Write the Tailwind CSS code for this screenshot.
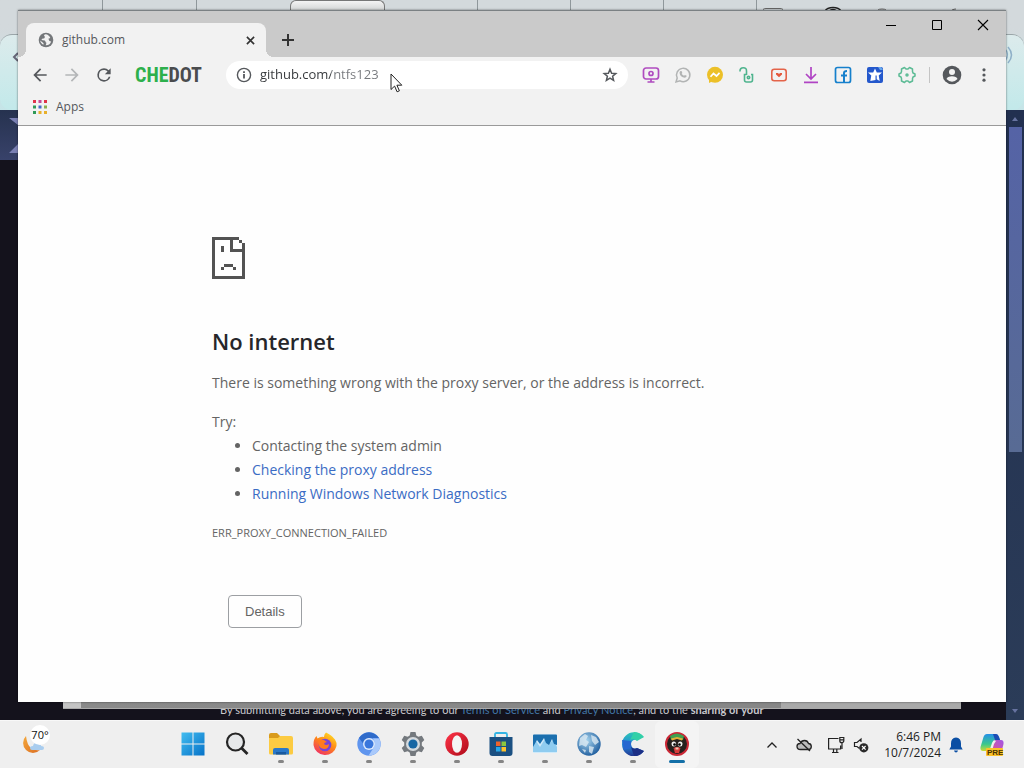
<!DOCTYPE html>
<html lang="en">
	<head>
		<meta charset="UTF-8" />
		<meta name="viewport" content="width=device-width, initial-scale=1.0" />
		<script src="https://cdn.jsdelivr.net/npm/@tailwindcss/browser@4"></script>
		<title>github.com</title>
	</head>
	<body class="h-screen flex flex-col overflow-hidden font-['Open_Sans','Noto_Sans',sans-serif] bg-[#14121c]">
		<main class="relative flex-1 flex flex-col">
			<!-- Browser behind -->
			<div class="h-[110px] bg-linear-to-b from-[#d3d9dc] from-25% to-[#c5e5e8] flex flex-col">
				<div class="h-[34px] flex items-start pl-[9px]">
					<span class="w-[94px] h-[11px] border-r border-[#8f979b]"></span>
					<span class="w-[94px] h-[11px] border-r border-[#8f979b]"></span>
					<span class="w-[93px] h-[11px]"></span>
					<span class="w-[95px] h-[11px] border border-b-0 border-[#777] rounded-t-md bg-linear-to-b from-[#f4f4f4] to-[#d0d2d2]"></span>
					<span class="w-[93px] h-[11px] border-r border-[#8f979b]"></span>
					<span class="w-[93px] h-[11px] border-r border-[#8f979b]"></span>
					<span class="w-[93px] h-[11px] border-r border-[#8f979b]"></span>
					<span class="w-[93px] h-[11px] border-r border-[#8f979b]"></span>
					<svg class="w-[200px] h-[11px]" viewBox="0 0 200 11" fill="none" stroke="#666">
						<path d="M6 9.500q1-1 3-1h14q2 0 3 1M195 10q2-1 4-1M121 10q1-1 4-1t4 1" />
						<path stroke="#222" stroke-width="1.500" d="M68 11q2-3.500 8-3.500t8 3.500M72 11q4-3 8 0" />
					</svg>
				</div>
				<div class="flex-1 flex justify-between items-start border-t border-[#9aa5a8] rounded-xl bg-linear-to-b from-[#dcebec] to-[#c2e9ea]">
					<svg class="mt-4 ml-3 w-2 h-3" viewBox="0 0 8 12" fill="none" stroke="#667" stroke-width="2"><path d="M6 2L2 6l4 4" /></svg>
					<svg class="mt-2 mr-2 w-3 h-6" viewBox="0 0 12 24" fill="none" stroke="#8fb0c8" stroke-width="1.500"><path d="M1 6q5 5 0 12M4 4q7 8 0 16" /></svg>
				</div>
			</div>
			<div class="flex-1 flex min-h-0">
				<div class="flex-1 flex flex-col">
					<div class="h-[50px] bg-linear-to-b from-[#26324f] to-[#38426a]">
						<svg class="w-[18px] h-[50px]" viewBox="0 0 18 50" fill="#7a80b4"><path d="M9 8h9v7zM9 43l9-9v9z" /></svg>
					</div>
					<div class="mt-auto grid h-[18px] pl-[63px]">
						<p class="col-start-1 row-start-1 pl-[157px] text-[11px] leading-4 whitespace-nowrap font-['Lato','Open_Sans',sans-serif] text-[#c8c8cc]">By submitting data above, you are agreeing to our <a href="#" class="text-[#4276a6]">Terms of Service</a> and <a href="#" class="text-[#4276a6]">Privacy Notice</a>, and to the <b>sharing of your</b></p>
						<div class="col-start-1 row-start-1 h-[7px] mr-[45px] relative bg-linear-to-r from-[#c4c4c4] from-2% via-[#8a8a8a] via-2% to-[#878787] to-78% border-b border-[#aaa] flex justify-end">
							<span class="w-[20%] bg-[#a9a9a9]"></span>
						</div>
					</div>
				</div>
				<div class="w-[18px] bg-linear-to-b from-[#223050] to-[#2b3c58] flex flex-col items-center">
					<svg class="w-4 h-[17px]" viewBox="0 0 16 17" fill="#6773a0"><path d="M5 11l3-4 3 4z" /></svg>
					<div class="w-[13px] h-[325px] bg-linear-to-b from-[#5563a6] to-[#586b94]"></div>
					<svg class="w-4 h-5 mt-auto" viewBox="0 0 16 20" fill="#6773a0"><path d="M5 9l3 4 3-4z" /></svg>
				</div>
			</div>

			<!-- Chedot window -->
			<section class="absolute top-[10px] bottom-[18px] inset-x-[18px] flex flex-col bg-[#fefefe] border-t border-[#7b8184] shadow-[0_0_2px_#0008]">
				<div class="h-[46px] flex bg-[#cacaca] pl-2">
					<div class="relative mt-3 w-60 flex items-center bg-[#f2f2f2] rounded-t-lg pl-3 pr-2">
						<span class="absolute -left-2 bottom-0 size-2 bg-[radial-gradient(circle_at_0_0,#cacaca_8px,#f2f2f2_8px)]"></span>
						<span class="absolute -right-2 bottom-0 size-2 bg-[radial-gradient(circle_at_100%_0,#cacaca_8px,#f2f2f2_8px)]"></span>
						<svg class="size-4" viewBox="0 0 16 16"><circle cx="8" cy="8" r="7.300" fill="#74777a" /><path fill="#f2f2f2" d="M7.500 2.300c-2 .2-1.500 2-.4 2.400l-1 1.800H4.600L3.300 8l3.400.4c1 .7.600 2 1.800 2.300l-.8 2.600c3 .2 4.800-1.500 5.400-3.800l-1.700-.5-1-2.200 1.900-.9c-.7-1.800-2.500-3.500-4.800-3.600zM2.200 8.500c.3 2 1.500 3.500 3.200 4.300l.2-1.600z" /></svg>
						<span class="ml-2 text-xs text-[#55585c]">github.com</span>
						<button aria-label="Close tab" class="ml-auto size-4 flex items-center justify-center text-[#333]">
							<svg class="size-[9px]" viewBox="0 0 10 10" stroke="currentColor" stroke-width="1.800"><path d="M1 1l8 8M9 1L1 9" /></svg>
						</button>
					</div>
					<button aria-label="New tab" class="mt-3 ml-2 w-7 flex items-center justify-center text-[#333]">
						<svg class="size-3" viewBox="0 0 12 12" stroke="currentColor" stroke-width="2"><path d="M6 0v12M0 6h12" /></svg>
					</button>
					<div class="ml-auto h-7 flex text-black">
						<button aria-label="Minimize" class="w-[46px] flex items-center justify-center"><svg class="size-[10px]" viewBox="0 0 10 10" fill="none" stroke="currentColor"><path d="M0 5.500h10" /></svg></button>
						<button aria-label="Maximize" class="w-[46px] flex items-center justify-center"><svg class="size-[10px]" viewBox="0 0 10 10" fill="none" stroke="currentColor"><path d="M.5.500h9v9h-9z" /></svg></button>
						<button aria-label="Close" class="w-[46px] flex items-center justify-center"><svg class="size-3" viewBox="0 0 12 12" fill="none" stroke="currentColor" stroke-width="1.100"><path d="M1 1l10 10M11 1L1 11" /></svg></button>
					</div>
				</div>

				<div class="h-9 flex items-center bg-[#f2f2f2] text-[#55585c] pl-3">
					<button aria-label="Back"><svg class="size-5" viewBox="0 0 24 24" fill="currentColor"><path d="M20 11H7.830l5.590-5.590L12 4l-8 8 8 8 1.410-1.410L7.830 13H20z" /></svg></button>
					<button aria-label="Forward" class="ml-3 text-[#b4b6b8]"><svg class="size-5" viewBox="0 0 24 24" fill="currentColor"><path d="M4 11h12.170l-5.590-5.590L12 4l8 8-8 8-1.410-1.410L16.170 13H4z" /></svg></button>
					<button aria-label="Reload" class="ml-3"><svg class="size-5" viewBox="0 0 24 24" fill="currentColor"><path d="M17.650 6.350A7.960 7.960 0 0 0 12 4a8 8 0 1 0 7.730 10h-2.080A6 6 0 1 1 12 6c1.660 0 3.140.690 4.220 1.780L13 11h7V4z" /></svg></button>
					<span class="ml-[21px] w-[91px] text-xl leading-7 font-bold font-['Roboto_Condensed','Liberation_Sans_Narrow','DejaVu_Sans_Condensed',sans-serif] text-[#4a4c4e]"><span class="text-[#2db04c]">CHE</span>DOT</span>
					<form class="flex-1 h-7 flex items-center rounded-full bg-white pl-[10px] pr-[10px]">
						<svg class="size-4" viewBox="0 0 16 16" fill="none" stroke="currentColor" stroke-width="1.400"><circle cx="8" cy="8" r="6.600" /><path stroke-width="1.800" d="M8 7v4.500M8 4.300v1.700" /></svg>
						<input type="text" aria-label="Address" value="github.com/ntfs123" class="ml-2 flex-1 min-w-0 text-[13px] outline-none bg-clip-text text-transparent bg-[linear-gradient(90deg,#333639_71px,#75787c_71px)]" />
						<button type="button" aria-label="Bookmark this page"><svg class="size-4" viewBox="0 0 16 16" fill="none" stroke="currentColor" stroke-width="1.500"><path d="M8 2.300l1.600 3.900 4.200.3-3.200 2.700 1 4.200L8 11.200l-3.600 2.200 1-4.200-3.200-2.700 4.200-.3z" /></svg></button>
					</form>
					<div class="ml-[14px] flex items-center gap-[14px]">
						<button aria-label="Screen capture"><svg class="size-[18px]" viewBox="0 0 18 18" fill="none" stroke="#b04cc0" stroke-width="1.700"><rect x="1.500" y="2" width="15" height="11" rx="2.500" /><circle cx="9" cy="7.500" r="2" /><path d="M9 13v2.500M5.500 16h7" /></svg></button>
						<button aria-label="WhatsApp"><svg class="size-[18px]" viewBox="0 0 18 18" fill="none" stroke="#b2b4b4" stroke-width="1.500"><path d="M2 16l1.200-4A6.700 6.700 0 1 1 6 14.900z" /><path fill="#b2b4b4" stroke="none" d="M6.500 5l1.300.2.500 1.800-.6.800q.9 1.500 2.400 2l.8-.8 1.800.8q0 1.700-1.800 2-4.800-.5-5.400-5 .1-1.200 1-1.800z" /></svg></button>
						<button aria-label="Messenger"><svg class="size-[18px]" viewBox="0 0 18 18"><circle cx="9" cy="8.800" r="8" fill="#ecc028" /><path fill="#ecc028" d="M3 12v5l4-2z" /><path fill="none" stroke="#fff" stroke-width="1.700" d="M4.500 10.800l3-3.300 3 2.500 3-3.200" /></svg></button>
						<button aria-label="Unblock"><svg class="size-[18px]" viewBox="0 0 18 18" fill="none" stroke="#4fb48e" stroke-width="1.600"><path d="M2 5.500V5q0-3.300 3.300-3.300T8.500 5v4" /><path d="M8.500 8.500h-2V14q0 2 2 2h4q2 0 2-2V8.500H13" /><circle cx="10.500" cy="11.500" r="1.200" /></svg></button>
						<button aria-label="Video download"><svg class="size-[18px]" viewBox="0 0 18 18" fill="none" stroke="#e4644a" stroke-width="1.600"><rect x="1.800" y="3.300" width="14.400" height="11.400" rx="2.500" /><path fill="#e4583c" stroke="none" d="M6 7h2l1 1 1-1h2v1.500L9 11.300 6 8.500z" /></svg></button>
						<button aria-label="Downloads"><svg class="size-[18px]" viewBox="0 0 18 18" fill="none" stroke="#b044c4" stroke-width="1.700"><path d="M9 1v11.500M4 8l5 5 5-5M2 16.300h14" /></svg></button>
						<button aria-label="Facebook"><svg class="size-[18px]" viewBox="0 0 18 18" fill="none" stroke="#1680cc" stroke-width="1.700"><rect x="1.500" y="1.500" width="15" height="15" rx="2" /><path stroke-width="2" d="M10 16V7q0-2 3-2M7 9.500h6" /></svg></button>
						<button aria-label="Bookmark manager"><svg class="size-[18px]" viewBox="0 0 18 18"><rect x="1" y="1" width="16" height="16" rx="2" fill="#2458cc" /><path fill="#fff" d="M9 2.500l1.800 4H16L12.700 9.500l1 5.500-3-1.800V9.500H9.500V14l-5.200 1 1-5.500L2 6.500h5.200z" /><path fill="#69a8ec" d="M12 1h3l2 3h-3z" /></svg></button>
						<button aria-label="Extension settings"><svg class="size-[18px]" viewBox="0 0 18 18" fill="none" stroke="#5cbb95" stroke-width="1.500" stroke-linejoin="round"><path d="M6.500 1.500L8 3h2l1.500-1.500L14.500 3v2.500l.5 1.500 2 1v2l-2 1-.5 1.500V15l-3 1.500L10 15H8l-1.500 1.500-3-1.500v-2.500L3 11l-2-1V8l2-1 .5-1.500V3z" /><circle cx="9" cy="9" r="1" /></svg></button>
					</div>
					<span class="ml-[13px] w-px h-4 bg-[#c4c4c4]"></span>
					<button aria-label="Profile" class="ml-3"><svg class="size-5" viewBox="0 0 20 20"><circle cx="10" cy="10" r="9.300" fill="#55585c" /><circle cx="10" cy="7" r="3" fill="#f2f2f2" /><path fill="#f2f2f2" d="M4.500 14q1-2.800 5.500-2.800t5.500 2.800Q13 16.700 10 16.700T4.500 14z" /></svg></button>
					<button aria-label="Menu" class="ml-3 mr-3"><svg class="size-5" viewBox="0 0 20 20" fill="currentColor"><circle cx="10" cy="4.800" r="1.600" /><circle cx="10" cy="10" r="1.600" /><circle cx="10" cy="15.200" r="1.600" /></svg></button>
				</div>

				<div class="h-[33px] flex items-center bg-[#f2f2f2] border-b border-[#9a9a9a] pl-[14px] pb-1">
					<a href="#" class="flex items-center gap-2 text-xs text-[#55585c]">
						<svg class="size-4" viewBox="0 0 16 16">
							<path fill="#e0344a" d="M1 1h3v3H1zM12 1h3v3h-3z" /><path fill="#c34a9a" d="M6.500 1h3v3h-3z" />
							<path fill="#2f9a58" d="M1 6.500h3v3H1z" /><path fill="#4468c8" d="M6.500 6.500h3v3h-3z" /><path fill="#8cae50" d="M12 6.500h3v3h-3z" />
							<path fill="#2f9a58" d="M1 12h3v3H1z" /><path fill="#e8b02c" d="M6.500 12h3v3h-3zM12 12h3v3h-3z" />
						</svg>
						Apps
					</a>
				</div>

				<article class="w-full max-w-[600px] mx-auto pt-[111px] text-[#646464] text-sm leading-6">
					<svg class="w-[33px] h-[42px]" viewBox="0 0 11 14" fill="#535353" shape-rendering="crispEdges"><path d="M0 0h9v1H7v3h3V2h1v12H0zM1 1v12h9V5H6V1zM9 1h1v1H9zM3 3h1v2H3zM4 9h3v1H4zM3 10h1v1H3zM7 10h1v1H7z" fill-rule="evenodd" /></svg>
					<h1 class="mt-[46px] text-[22px] leading-8 font-semibold text-[#26262a]">No internet</h1>
					<p class="mt-[14px]">There is something wrong with the proxy server, or the address is incorrect.</p>
					<p class="mt-[15px]">Try:</p>
					<ul class="list-disc pl-10">
						<li>Contacting the system admin</li>
						<li><a href="#" class="text-[#3b6cc4]">Checking the proxy address</a></li>
						<li><a href="#" class="text-[#3b6cc4]">Running Windows Network Diagnostics</a></li>
					</ul>
					<p class="mt-[15px] text-[11px]">ERR_PROXY_CONNECTION_FAILED</p>
					<button class="mt-[50px] ml-4 h-[33px] px-4 border border-[#9c9fa3] rounded font-['Liberation_Sans',Arial,sans-serif] text-[13px]">Details</button>
				</article>
			</section>

			<!-- Mouse pointer -->
			<svg class="absolute left-[390px] top-[73px] w-[13px] h-5" viewBox="0 0 13 20" fill="#fff" stroke="#222"><path d="M1 1v15.500l3.600-3.400 2.500 5.700 2.300-1-2.500-5.600h4.900z" /></svg>
		</main>

		<!-- Taskbar -->
		<footer class="h-12 flex items-center bg-[#efefef] border-t border-[#f8f8f8] text-[#222]">
			<button aria-label="Weather 70°" class="relative w-[171px] h-full flex items-center pl-5">
				<svg class="w-8 h-8" viewBox="0 0 32 32"><defs><linearGradient id="moon" x1="0" y1="0" x2="1" y2="1"><stop offset="0" stop-color="#f4a83a" /><stop offset="1" stop-color="#dc6f24" /></linearGradient></defs><path fill="url(#moon)" d="M6 7a9.500 9.500 0 1 0 14 14q-5 1-9-2T6 7z" /><path fill="#a9cdef" d="M12 21q-2 0-2-2t3-2q1-4 5-3 3 0 3 3 3 0 3 2t-2 2z" /></svg>
				<span class="absolute left-[30px] top-1 size-5 flex items-center justify-center rounded-full bg-white text-[11px] leading-5 text-[#111]">70°</span>
			</button>
			<nav class="h-full flex [&>button]:w-11 [&>button]:h-full [&>button]:flex [&>button]:flex-col [&>button]:items-center [&>button]:gap-1 [&>button]:pt-[11px] [&_svg]:size-6 [&_i]:w-[6px] [&_i]:h-[3px] [&_i]:rounded-full [&_i]:bg-[#858585]">
				<button aria-label="Start"><svg viewBox="0 0 24 24"><defs><linearGradient id="win" x1="0" y1="0" x2="1" y2="1"><stop offset="0" stop-color="#42bdf0" /><stop offset="1" stop-color="#0672c8" /></linearGradient></defs><path fill="url(#win)" d="M.5.500h11v11H.5zM12.500.500h11v11h-11zM.5 12.500h11v11H.5zM12.500 12.500h11v11h-11z" /></svg></button>
				<button aria-label="Search"><svg viewBox="0 0 24 24" fill="none" stroke="#252525" stroke-width="2.200"><circle cx="10.500" cy="10" r="8.500" fill="#e6e8ea" /><path stroke-width="2.800" d="M16.500 16l6 6" /></svg></button>
				<button aria-label="File Explorer"><svg viewBox="0 0 24 24"><path fill="#d99b1c" d="M0 3q0-2 2-2h6l3 3v4H0z" /><path fill="#fccb42" d="M0 6h9l2-2h11q2 0 2 2v15q0 1.500-1.500 1.500h-21Q0 22.500 0 21z" /><path fill="#2a78c8" d="M4 22.500V18q0-2 2-2h12q2 0 2 2v4.500z" /><path fill="#1859a0" d="M7 20h10v2.500H7z" /></svg><i></i></button>
				<button aria-label="Firefox"><svg viewBox="0 0 24 24"><defs><linearGradient id="fox" x1=".8" y1="0" x2=".2" y2="1"><stop offset="0" stop-color="#ffe226" /><stop offset=".45" stop-color="#ff8a16" /><stop offset="1" stop-color="#ee2a6b" /></linearGradient></defs><path fill="url(#fox)" d="M13 .500q6 3 8 6l1 1q2 3 1.500 6.500A11.700 11.700 0 0 1 .5 13Q.3 7 3.500 4l1 2.500Q8 4 11 5q0-3 2-4.500z" /><circle cx="12" cy="13" r="6.300" fill="#7744d8" /><path fill="#ff7a20" d="M5 9q3-2 6-1l3 2q-3 .5-3 2 2 2 5 0 0 5-5 5-6-1-6-8z" /></svg><i></i></button>
				<button aria-label="Chromium"><svg viewBox="0 0 24 24"><circle cx="12" cy="12" r="11.700" fill="#5f95ee" /><path fill="#2f6bca" d="M2 6A11.700 11.700 0 0 1 22 6H12q-5 1-5.500 6z" /><path fill="#a9c9fb" d="M22.200 6.500A11.700 11.700 0 0 1 11.500 23.700L17 15q2-4-1-8.500z" /><circle cx="12" cy="12" r="6" fill="#dce9fc" /><circle cx="12" cy="12" r="4.500" fill="#3976dc" /></svg><i></i></button>
				<button aria-label="Settings"><svg viewBox="0 0 24 24"><path fill="#74797e" d="M9.500 0h5l.8 3.500 2 1.200 3.500-1 2.500 4.200-2.500 2.500v3.200l2.500 2.500-2.500 4.200-3.500-1-2 1.200-.8 3.500h-5l-.8-3.500-2-1.200-3.500 1-2.500-4.200 2.500-2.500v-3.200L.7 7.900l2.500-4.200 3.500 1 2-1.200z" /><circle cx="12" cy="12" r="7" fill="#d5dade" /><circle cx="12" cy="12" r="4.600" fill="#1767a4" /></svg><i></i></button>
				<button aria-label="Opera"><svg viewBox="0 0 24 24"><defs><linearGradient id="opera" x1="0" y1="0" x2="1" y2="1"><stop offset="0" stop-color="#ff3448" /><stop offset="1" stop-color="#ad0a19" /></linearGradient></defs><circle cx="12" cy="12" r="11.700" fill="url(#opera)" /><ellipse cx="12" cy="12" rx="5" ry="8.800" fill="#f4f4f4" /></svg><i></i></button>
				<button aria-label="Microsoft Store"><svg viewBox="0 0 24 24"><path fill="none" stroke="#33b4e4" stroke-width="1.800" d="M6 7V2.500Q6 1 7.500 1h9Q18 1 18 2.500V7" /><path fill="#1b5082" d="M.5 5h23v16q0 3-3 3h-17q-3 0-3-3z" /><path fill="#f0642c" d="M7 9.500h4.500V14H7z" /><path fill="#8cc63f" d="M12.500 9.500H17V14h-4.500z" /><path fill="#28a8ea" d="M7 15h4.500v4.500H7z" /><path fill="#ffc22c" d="M12.500 15H17v4.500h-4.500z" /></svg><i></i></button>
				<button aria-label="Task Manager"><svg viewBox="0 0 24 24"><rect y="2.500" width="24" height="18.500" rx="1" fill="#cfeafa" /><path fill="#64b8ea" d="M0 13l3-4 4 6 5-8 4 5 4-4 4 7v5H0z" opacity=".6" /><path fill="#1b6fae" d="M0 3.500q0-1 1-1h22q1 0 1 1V13l-3-1-2-5-3 6-3-2-2-5-4 6-3-4-4 7z" /></svg><i></i></button>
				<button aria-label="Web browser"><svg viewBox="0 0 24 24"><defs><radialGradient id="globe" cx=".4" cy=".35" r=".7"><stop offset="0" stop-color="#a7d4ee" /><stop offset="1" stop-color="#1c5b9c" /></radialGradient></defs><circle cx="12" cy="12" r="11.700" fill="url(#globe)" /><path fill="#dceaf2" d="M3 6l5-4 3 2-2 4 3 2-3 5-4-2-3 1zM14 3l5 2 3 5-4 3-3-4zM12 14l5 1-2 7-3-2zM5 17l4 1-1 3z" opacity=".8" /></svg><i></i></button>
				<button aria-label="CCleaner Browser"><svg viewBox="0 0 24 24"><defs><linearGradient id="cc" x1="0" y1="0" x2="0" y2="1"><stop offset="0" stop-color="#2cc7b4" /><stop offset=".5" stop-color="#2389da" /><stop offset="1" stop-color="#22368f" /></linearGradient></defs><path fill="url(#cc)" d="M22.500 5A12 12 0 1 0 23 19l-7-3q-5 2-6-4 1-5 6-4z" /><path fill="#32d0a8" d="M13 0q6 0 10 5l-7 4q-3-3-7-1z" /><path fill="#1c2f86" d="M10 15q3 3 6 1l7 3q-4 5-10 5z" /><path fill="#2667d0" d="M1 8l9 1v7l-7 2z" /></svg><i></i></button>
				<button aria-label="Chedot" class="bg-[#f4f4f4] rounded-md"><svg viewBox="0 0 24 24"><circle cx="12" cy="12" r="11" fill="#26201e" stroke="#cb2836" stroke-width="2" /><path fill="#3fa050" d="M5 4q7-5 14 0l-1 4-6-2-6 2z" /><path fill="#e0b038" d="M6 6.500l6-1.500 6 1.500-1 2-5-1.500-5 1.500z" /><ellipse cx="8.800" cy="12" rx="2.300" ry="2.600" fill="#eee" /><ellipse cx="15.200" cy="12" rx="2.300" ry="2.600" fill="#eee" /><circle cx="9.500" cy="12.500" r="1.300" /><circle cx="14.500" cy="12.500" r="1.300" /><path fill="#d83a3a" d="M8.500 16q3.500-2 7 0l-1.500 5h-4z" /><path fill="#f0c8b0" d="M10.500 15.500h3v2h-3z" /></svg><span class="w-4 h-[3px] rounded-full bg-[#1470a8]"></span></button>
			</nav>
			<div class="ml-auto h-full flex items-center pr-5">
				<button aria-label="Show hidden icons"><svg class="w-3 h-3" viewBox="0 0 12 12" fill="none" stroke="currentColor" stroke-width="1.300"><path d="M1.500 8.500L6 4l4.500 4.500" /></svg></button>
				<button aria-label="OneDrive" class="ml-[18px]"><svg class="w-4 h-4" viewBox="0 0 16 16" fill="#bcbcbc" stroke="currentColor" stroke-width="1.300"><path d="M4.500 12.500Q1 12.500 1 9.300q0-2.700 3-2.800Q5.500 3.500 8.500 3.500t4 3q2.800.3 2.800 3 0 3-2.800 3z" /><path d="M1.500 2l12.500 12" /></svg></button>
				<button aria-label="Network" class="ml-[15px]"><svg class="w-[18px] h-[18px]" viewBox="0 0 18 18" fill="none" stroke="currentColor" stroke-width="1.200"><path d="M11.500 2.500H1.600v10.500h12V9.500M5 16.500h6.500M6.500 13v3.500M9.800 13v3.500M15 7v6" /><path d="M12.800 1.500h4v3.200q0 2-2 2t-2-2zM12.800 3.800h4" /></svg></button>
				<button aria-label="Volume muted" class="ml-2"><svg class="w-4 h-4" viewBox="0 0 16 16"><path fill="none" stroke="#222" stroke-width="1.200" d="M6.500 11.500L4 9.500H1.500v-4H4L8 2v3" /><circle cx="10.800" cy="10.800" r="4.600" fill="#2a2a2a" /><path stroke="#fff" stroke-width="1.200" d="M9 9l3.600 3.600M12.600 9L9 12.600" /></svg></button>
				<button class="ml-3 w-[60px] text-right text-xs leading-4 whitespace-nowrap flex flex-col items-end">
					<span>6:46 PM</span>
					<span>10/7/2024</span>
				</button>
				<button aria-label="Notifications" class="ml-2"><svg class="w-[14px] h-4" viewBox="0 0 14 16" fill="#0b4fa4"><path d="M7 .500q5 .5 5 6v3l1.700 3H.3L2 9.500v-3q0-5.500 5-6zM5 13.500h4q-.5 2-2 2t-2-2z" /></svg></button>
				<button aria-label="Copilot" class="ml-[17px]"><svg class="w-6 h-6" viewBox="0 0 24 24"><defs><linearGradient id="cp1" x1="0" y1="0" x2="0" y2="1"><stop offset="0" stop-color="#2490e8" /><stop offset=".6" stop-color="#3cc88c" /><stop offset="1" stop-color="#c8dc34" /></linearGradient><linearGradient id="cp2" x1="1" y1="0" x2="0" y2="1"><stop offset="0" stop-color="#a058e8" /><stop offset="1" stop-color="#f0507c" /></linearGradient></defs><path fill="url(#cp1)" d="M7 1h9q2 0 3 3l1 3h-5q-2 0-3 3l-2 6q-1 2-3 2H3q-3 0-2.500-4l3-10Q4.500 1 7 1z" /><path fill="#1c4cb4" d="M13 1h3q2 0 3 3l1 3h-5z" /><path fill="url(#cp2)" d="M14 7h7q3 0 2.500 4l-2 8q-1 3-4 3H9q2 0 3-4l2-7 2-3z" /><rect x="6" y="15" width="17" height="8" rx="1" fill="#fcc22a" /><text x="7" y="22" font-size="8" font-weight="bold" fill="#4a3300" font-family="Liberation Sans, sans-serif">PRE</text></svg></button>
			</div>
		</footer>
	</body>
</html>
